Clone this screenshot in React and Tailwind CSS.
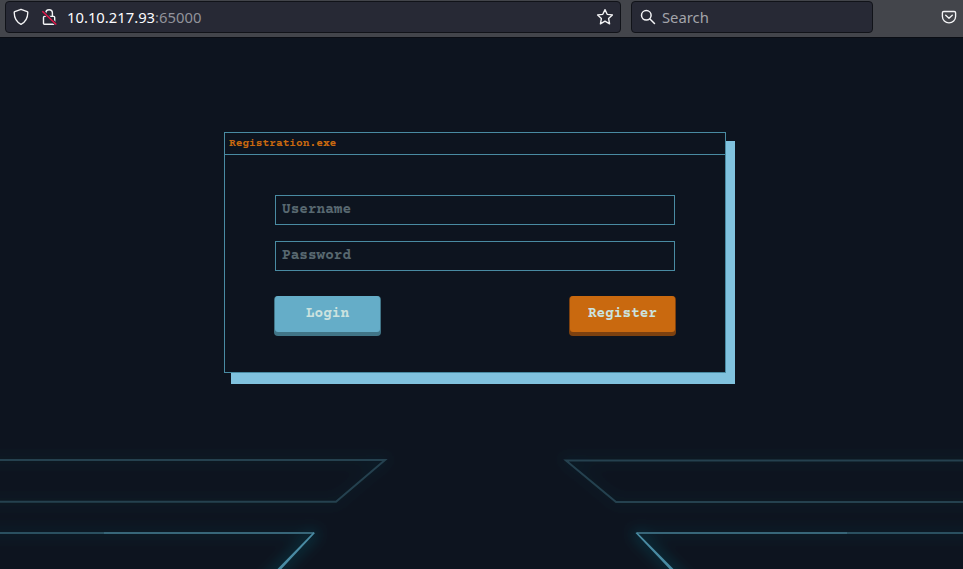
import React from "react";

function ShieldIcon() {
  return (
    <svg width="16" height="18" viewBox="0 0 16 18" fill="none" stroke="#f4f4f6" strokeWidth="1.35" strokeLinejoin="round">
      <path d="M8 1.3 14.2 3.6c.4.2.6.4.6.9C14.7 10.5 12.3 14.200 8 16.300 3.700 14.200 1.300 10.500 1.200 4.500c0-.5.2-.7.6-.9Z" />
    </svg>
  );
}

function InsecureLockIcon() {
  return (
    <svg width="16" height="18" viewBox="0 0 16 18" fill="none">
      <path d="M4.800 8.400V5a3.300 3.300 0 0 1 6.600 0v3.400M3.500 8.400h9.200c.6 0 1 .4 1 1v5.900c0 .6-.4 1-1 1H3.500c-.6 0-1-.4-1-1V9.400c0-.6.4-1 1-1Z" stroke="#f4f4f6" strokeWidth="1.4" />
      <path d="M1.300 3.200 15.300 16.500" stroke="#272935" strokeWidth="3" />
      <path d="M1.300 3.200 15.300 16.500" stroke="#e3174a" strokeWidth="1.5" />
    </svg>
  );
}

function StarIcon() {
  return (
    <svg width="18" height="18" viewBox="0 0 18 18" fill="none" stroke="#f4f4f6" strokeWidth="1.35" strokeLinejoin="round">
      <path d="m9 1.600 2.200 4.700 5.200.6-3.800 3.600 1 5.300L9 13.200l-4.600 2.600 1-5.300-3.800-3.600 5.200-.6Z" />
    </svg>
  );
}

function SearchIcon() {
  return (
    <svg width="16" height="16" viewBox="0 0 16 16" fill="none" stroke="#f4f4f6" strokeWidth="1.5" strokeLinecap="round">
      <circle cx="6.300" cy="6.300" r="4.800" />
      <path d="m10 10 4.500 4.500" />
    </svg>
  );
}

function PocketIcon() {
  return (
    <svg width="16" height="16" viewBox="0 0 16 16" fill="none" stroke="#f4f4f6" strokeWidth="1.35" strokeLinecap="round" strokeLinejoin="round">
      <path d="M2.800 2.500h10.400c.8 0 1.400.6 1.400 1.300V7.500a6.600 6.300 0 0 1-13.200 0V3.800c0-.7.6-1.300 1.400-1.300Z" />
      <path d="m4.700 6.300 3.300 3 3.300-3" />
    </svg>
  );
}

function BrowserBar() {
  return (
    <header className="flex h-[37px] shrink-0 items-start bg-[#43454b] pl-[5px] pt-px font-['Noto_Sans',sans-serif] text-[14.8px]">
      <div className="flex h-8 w-[616px] items-center rounded border border-[#111319] bg-[#272935] pl-[7px] pr-[6px]">
        <ShieldIcon />
        <span className="ml-3"><InsecureLockIcon /></span>
        <p className="ml-[10px] flex-1 whitespace-nowrap leading-8 text-[#fbfbfe]">
          10.10.217.93<span className="text-[#92939b]">:65000</span>
        </p>
        <StarIcon />
      </div>
      <div className="ml-[10px] flex h-8 w-[242px] items-center rounded border border-[#111319] bg-[#272935] pl-2">
        <SearchIcon />
        <span className="ml-[6px] leading-8 text-[#a3a4aa]">Search</span>
      </div>
      <span className="ml-auto mr-[6px] mt-2"><PocketIcon /></span>
    </header>
  );
}

function NeonBackdrop() {
  return (
    <svg className="absolute inset-x-0 bottom-0" width="963" height="149" viewBox="0 420 963 149" fill="none">
      <defs>
        <filter id="glow" filterUnits="userSpaceOnUse" x="-60" y="400" width="1083" height="240">
          <feGaussianBlur stdDeviation="7" />
        </filter>
      </defs>
      <g filter="url(#glow)" stroke="#157486">
        <path d="M-20 460H385L336 502H-20M983 460H566l50 42H983" strokeWidth="6" opacity=".11" />
        <path d="M-20 533H315L250 598M983 533H636l65 65" strokeWidth="7" opacity=".15" />
        <path d="M315 533 250 598M636 533l65 65" strokeWidth="8" opacity=".26" />
      </g>
      <g strokeWidth="2">
        <path d="M0 460H385L336 501.700H0" stroke="#25414f" />
        <path d="M963 460.500H566l50 41.500H963" stroke="#25414f" />
        <path d="M0 533H104M847 533H963" stroke="#2a5060" />
        <path d="M104 533H314M637 533H847" stroke="#376679" />
      </g>
      <path d="m313.500 532.200 1.500.8L280.500 570h-4ZM637 532.200l-1.500.8L670.500 570h4Z" fill="#4a8ba3" />
    </svg>
  );
}

function Field({ type, label }) {
  return (
    <input
      type={type}
      placeholder={label}
      aria-label={label}
      className="block h-[30px] w-[400px] border border-[#498ba2] bg-transparent pb-px pl-[6px] text-[14.4px] font-bold text-[#d0e5e4] outline-none placeholder:text-[#586870] placeholder:opacity-100"
    />
  );
}

function RegistrationWindow() {
  return (
    <form className="relative ml-[224px] mt-[94px] h-[241px] w-[502px] border border-[#498ba2] bg-[#0d141f] font-['Courier_10_Pitch','Courier_Prime','Liberation_Mono',monospace] font-bold shadow-[8px_10px_0_1px_#80c2de]">
      <h1 className="h-[22px] border-b border-[#498ba2] pl-1 text-[11.2px] leading-[21px] text-[#c9690f]">
        Registration.exe
      </h1>
      <div className="px-[50px] pt-10">
        <div className="flex flex-col gap-4">
          <Field type="text" label="Username" />
          <Field type="password" label="Password" />
        </div>
        <div className="-mx-px mt-[25px] flex justify-between text-[14.4px] text-[#cbe2df]">
          <button type="button" className="h-10 w-[107px] rounded bg-[#417587]">
            <span className="mx-px -mt-1 block h-9 rounded-[3px] bg-[#65adc8] leading-[36px]">Login</span>
          </button>
          <button type="button" className="h-10 w-[107px] rounded bg-[#7d410f]">
            <span className="mx-px -mt-1 block h-9 rounded-[3px] bg-[#c9690f] leading-[36px]">Register</span>
          </button>
        </div>
      </div>
    </form>
  );
}

export default function App() {
  return (
    <div className="relative flex h-[569px] w-[963px] flex-col overflow-hidden bg-[#0d141f]">
      <NeonBackdrop />
      <BrowserBar />
      <main className="flex-1 border-t border-[#0a0d14]">
        <RegistrationWindow />
      </main>
    </div>
  );
}
